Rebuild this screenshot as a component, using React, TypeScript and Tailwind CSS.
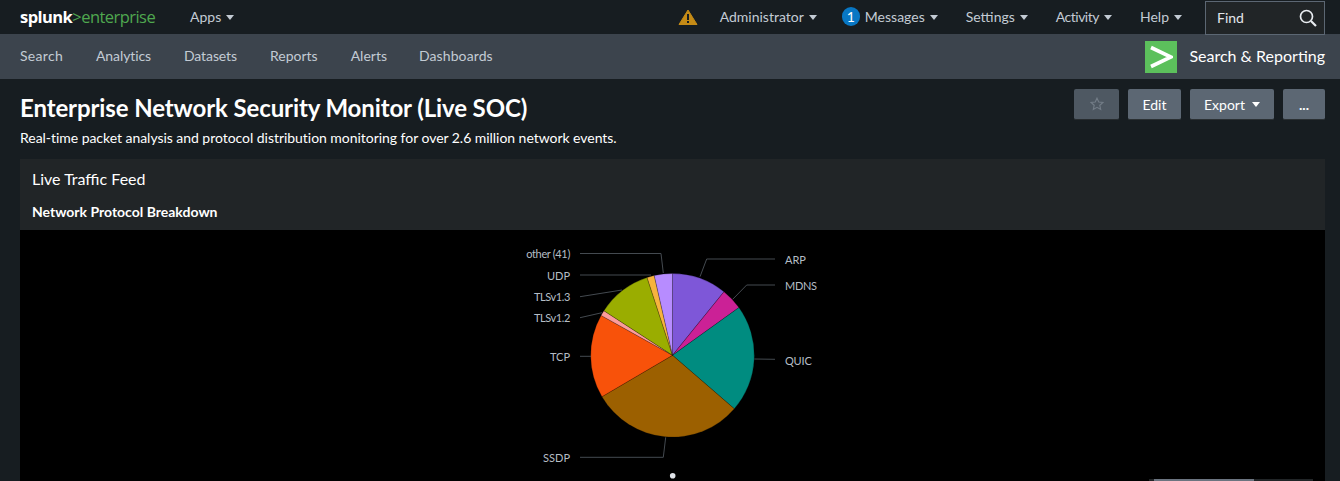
import React from "react";

const center = { x: 672.5, y: 355.3 };
const radius = 81.8;
const wedges: [number, number, string][] = [
  [0, 39, "#7e57d8"],
  [39, 54.3, "#cb2196"],
  [54.3, 130.9, "#008c80"],
  [130.9, 239.6, "#9c6000"],
  [239.6, 299.2, "#f8520a"],
  [299.2, 303, "#fd9c9c"],
  [303, 341.9, "#9aad00"],
  [341.9, 347.1, "#f7b33e"],
  [347.1, 360, "#b78cff"],
];

function point(angle: number) {
  const a = (angle * Math.PI) / 180;
  return `${center.x + radius * Math.sin(a)} ${center.y - radius * Math.cos(a)}`;
}

function wedgePath(from: number, to: number) {
  const large = to - from > 180 ? 1 : 0;
  return `M${center.x} ${center.y}L${point(from)}A${radius} ${radius} 0 ${large} 1 ${point(to)}Z`;
}

const lines = [
  "M580 253.5H661L663.3 273",
  "M580 275H651",
  "M580 296.7L622 290",
  "M580 317.7L602 312.7",
  "M580 356.3H591",
  "M580 457.3H663.3L665.7 437.3",
  "M775 259H706.7L700 276.7",
  "M775 285H746.7L732.7 299.3",
  "M775 359.3L754.3 359",
];

const leftLabels: [string, number, number][] = [
  ["other (41)", 258, -0.35],
  ["UDP", 280, 0],
  ["TLSv1.3", 301, -0.4],
  ["TLSv1.2", 322, -0.4],
  ["TCP", 361, 0],
  ["SSDP", 462, 0],
];
const rightLabels: [string, number, number][] = [
  ["ARP", 264, 0],
  ["MDNS", 290, -0.3],
  ["QUIC", 365, -0.2],
];

function Caret({ className = "" }: { className?: string }) {
  return (
    <svg width="8" height="5" viewBox="0 0 8 5" className={className}>
      <path d="M0 0H8L4 5Z" fill="currentColor" />
    </svg>
  );
}

function TopItem({ label, className = "" }: { label: string; className?: string }) {
  return (
    <div className="flex items-center gap-[5px] text-[#c3cbd4] pb-[2px]">
      <span className={className}>{label}</span>
      <Caret className="mt-[2px]" />
    </div>
  );
}

function ActionButton({ children, className = "" }: { children: React.ReactNode; className?: string }) {
  return (
    <div
      className={`h-[31px] flex items-center justify-center rounded-[2px] bg-[#5c6773] text-white text-[14px] border-b border-[#2b3033] ${className}`}
    >
      {children}
    </div>
  );
}

export default function App() {
  return (
    <div className="h-[481px] w-[1340px] overflow-hidden bg-[#171d21] font-['Lato',sans-serif] text-[14px]">
      <header className="h-[34px] flex items-center justify-between pl-[20px] pr-[15px] bg-[#171d21]">
        <div className="flex items-center">
          <div className="w-[170px] text-[16.5px] leading-[20px] tracking-[-0.55px] whitespace-nowrap font-['Open_Sans',sans-serif]">
            <span className="text-white font-bold">splunk</span>
            <span className="text-[#4fa84f]">&gt;enterprise</span>
          </div>
          <TopItem label="Apps" />
        </div>
        <div className="flex items-center h-full">
          <svg width="20" height="16" viewBox="0 0 20 16" className="mr-[22px] mb-[1px]">
            <path d="M10 1L19 15.5H1Z" fill="#c58b16" stroke="#c58b16" strokeLinejoin="round" />
            <rect x="9" y="5" width="2" height="6" fill="#171d21" />
            <rect x="9" y="12" width="2" height="2" fill="#171d21" />
          </svg>
          <div className="mr-[25px]">
            <TopItem label="Administrator" />
          </div>
          <div className="w-[18px] h-[19px] mb-[1px] rounded-full bg-[#0877c4] text-white flex items-center justify-center mr-[5px]">
            1
          </div>
          <div className="mr-[28px]">
            <TopItem label="Messages" />
          </div>
          <div className="mr-[28px]">
            <TopItem label="Settings" />
          </div>
          <div className="mr-[28px]">
            <TopItem label="Activity" className="tracking-[-0.5px]" />
          </div>
          <div className="mr-[23px]">
            <TopItem label="Help" />
          </div>
          <div className="mt-[1px] w-[120px] h-[34px] border border-[#5c6773] bg-[#212527] flex items-center justify-between pl-[11px] pr-[7px] text-[#e1e6eb]">
            <span className="pb-[1px]">Find</span>
            <svg width="18" height="18" viewBox="0 0 18 18" fill="none" stroke="#e8ecf0" strokeWidth="1.7">
              <circle cx="7.5" cy="7.5" r="6" />
              <path d="M12 12L17 17" strokeWidth="2.2" />
            </svg>
          </div>
        </div>
      </header>

      <nav className="h-[45px] bg-[#3c444d] flex items-center justify-between pl-[20px] pr-[15px] text-[#c3cbd4]">
        <div className="flex items-center gap-[33px] pb-[2px]">
          <span className="tracking-[0.3px]">Search</span>
          <span className="tracking-[-0.1px]">Analytics</span>
          <span className="tracking-[-0.1px]">Datasets</span>
          <span>Reports</span>
          <span className="-mr-[1px]">Alerts</span>
          <span className="tracking-[0.1px]">Dashboards</span>
        </div>
        <div className="flex items-center gap-[12px]">
          <div className="w-[32px] h-[32px] bg-[#5cc05c] flex items-center justify-center">
            <svg width="24" height="24" viewBox="0 0 24 24" fill="none" stroke="white" strokeWidth="3.6">
              <path d="M2 2.5L22 12L2 21.5" />
            </svg>
          </div>
          <span className="text-[16px] text-white pb-[2px]">Search &amp; Reporting</span>
        </div>
      </nav>

      <main className="pr-[15px] pl-[20px]">
        <div className="flex justify-between pt-[10px] h-[80px]">
          <div className="pt-[1px]">
            <h1 className="text-[24px] leading-[36px] font-bold text-white tracking-[-0.11px]">
              Enterprise Network Security Monitor (Live SOC)
            </h1>
            <p className="text-[14px] leading-[20px] mt-[2px] text-white tracking-[-0.04px]">
              Real-time packet analysis and protocol distribution monitoring for over 2.6 million network events.
            </p>
          </div>
          <div className="flex gap-[9px]">
            <ActionButton className="w-[45px] opacity-80">
              <svg width="14" height="14" viewBox="0 0 24 24" fill="none" stroke="#8a95a1" strokeWidth="2">
                <path d="M12 2l3 6.6 7.2.8-5.4 4.8 1.5 7.1L12 17.7l-6.3 3.6 1.5-7.1L1.8 9.4 9 8.6z" />
              </svg>
            </ActionButton>
            <ActionButton className="w-[53px]">Edit</ActionButton>
            <ActionButton className="w-[84px] gap-[7px]">
              <span>Export</span>
              <Caret />
            </ActionButton>
            <ActionButton className="w-[42px] font-bold">...</ActionButton>
          </div>
        </div>

        <section className="bg-[#212527] w-[1305px] h-[322px] flex flex-col">
          <div className="h-[40px] pl-[12px] pb-[1px] flex items-center text-[16px] text-white">Live Traffic Feed</div>
          <div className="h-[31px] pl-[12px] pb-[6px] flex items-center text-[14px] font-bold text-white">
            Network Protocol Breakdown
          </div>
          <div className="relative flex-1 bg-black">
            <svg
              width="1305"
              height="251"
              viewBox="20 230 1305 251"
              className="block"
              fontFamily="Lato, sans-serif"
              fontSize="11"
            >
              {wedges.map(([from, to, fill]) => (
                <path key={from} d={wedgePath(from, to)} fill={fill} stroke="#000" strokeOpacity="0.35" strokeWidth="0.6" />
              ))}
              {lines.map((d) => (
                <path key={d} d={d} fill="none" stroke="#444a50" strokeWidth="1" />
              ))}
              {leftLabels.map(([label, y, spacing]) => (
                <text key={label} x="570" y={y} textAnchor="end" fill="#b5bdc5" letterSpacing={spacing}>
                  {label}
                </text>
              ))}
              {rightLabels.map(([label, y, spacing]) => (
                <text key={label} x="785" y={y} fill="#b5bdc5" letterSpacing={spacing}>
                  {label}
                </text>
              ))}
              <circle cx="672.7" cy="475.8" r="2.8" fill="#dfe3e8" />
            </svg>
            <div className="absolute bottom-0 left-[1129px] w-[164px] h-[2px] bg-[#212527] pl-[5px]">
              <div className="w-[100px] h-full bg-[#6b7480]" />
            </div>
          </div>
        </section>
      </main>
    </div>
  );
}
